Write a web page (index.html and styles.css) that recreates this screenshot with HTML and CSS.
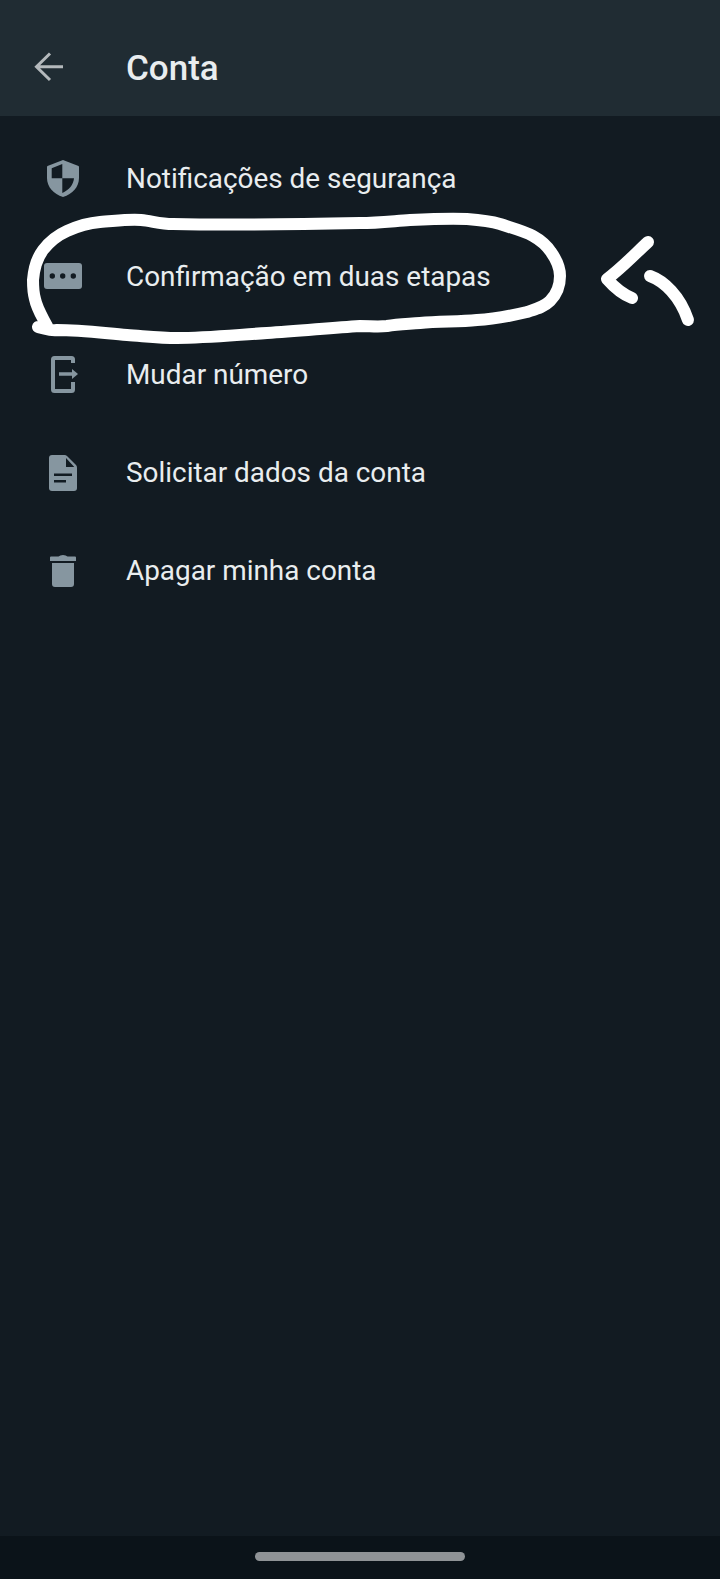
FILE: index.html
```html
<!DOCTYPE html>
<html lang="pt">
<head>
<meta charset="utf-8">
<title>Conta</title>
<link rel="stylesheet" href="styles.css">
</head>
<body>
<div class="screen">
  <header class="topbar">
    <svg class="back" viewBox="0 0 32 32" width="32" height="32"><path d="M30 15.700H4M17 2.500 3.500 15.700 17 29"/></svg>
    <h1 class="title">Conta</h1>
  </header>
  <main class="menu">
    <div class="row">
      <svg class="icon" viewBox="0 0 40 40"><path d="M20 2 4.500 8Q4 8.300 4 9v11c0 9 6.500 16 16 19 9.500-3 16-10 16-19V9q0-.7-.5-1z"/><path class="cut" d="M8.700 10.300 19.300 6v14.300H8.700zM19.300 20.300H31c-.5 6.500-5 11.700-11.700 14.700z"/></svg>
      <span class="label">Notificações de segurança</span>
    </div>
    <div class="row">
      <svg class="icon" viewBox="0 0 40 40"><rect x="1" y="7" width="38" height="26" rx="3"/><circle class="cut" cx="9.300" cy="20" r="2.700"/><circle class="cut" cx="19.700" cy="20" r="2.700"/><circle class="cut" cx="30.300" cy="20" r="2.700"/></svg>
      <span class="label">Confirmação em duas etapas</span>
    </div>
    <div class="row">
      <svg class="icon" viewBox="0 0 40 40"><path class="outline" d="M30 9V5.500q0-1.500-1.500-1.500h-17Q10 4 10 5.500v30q0 1.500 1.500 1.500h17q1.500 0 1.500-1.500V28"/><path class="arrow" d="M16 20h14"/><path d="m29 15 6 5-6 5z"/></svg>
      <span class="label">Mudar número</span>
    </div>
    <div class="row">
      <svg class="icon" viewBox="0 0 40 40"><path d="M9 3h12.500q1.500 0 2.500 1L33 13q1 1 1 2.500V36q0 3-3 3H9q-3 0-3-3V6q0-3 3-3z"/><path class="cut" d="M23 6v9h8.300zM11 21.500h18V24H11zM11 28h12v2.500H11z"/></svg>
      <span class="label">Solicitar dados da conta</span>
    </div>
    <div class="row">
      <svg class="icon" viewBox="0 0 40 40"><path d="M9 13h22v21q0 3-3 3H12q-3 0-3-3zM8 6.500h7.500Q17 5 20 5t4.500 1.500H32q1 0 1 1V11H7V7.500q0-1 1-1z"/></svg>
      <span class="label">Apagar minha conta</span>
    </div>
  </main>
  <footer class="navbar"><span class="pill"></span></footer>
  <svg class="scribble" viewBox="0 0 720 1579">
    <path d="M47 326C43 318 37 309 35 299C33 292 33 286 33 280C34 268 37 258 43 250C50 241 58 235 67 231C78 226 88 223 100 222C115 221 128 219 141 220C152 221 160 224 173 224C220 225 310 224 360 223C378 223 394 221 410 220C430 219 450 218 467 219C480 220 490 221 500 224C512 228 524 231 533 236C542 241 547 246 551 252C556 259 560 266 560 276C560 287 556 295 550 301C544 307 536 309 527 312C510 316 495 319 477 320C458 322 440 321 420 323C408 324 398 324 387 326C378 327 370 326 360 326C330 328 298 331 267 333C235 335 205 338 177 338C160 338 143 336 127 335C103 333 80 330 57 330C50 331 44 328 38 327"/>
    <path d="M648 242C637 252 622 268 607 279C614 287 622 294 632 298"/>
    <path d="M650 276C664 281 680 296 688 320"/>
  </svg>
</div>
</body>
</html>
```
FILE: styles.css
```css
* {
  box-sizing: border-box;
}

html,
body {
  margin: 0;
  padding: 0;
  background: #121b22;
}

.screen {
  position: relative;
  display: flex;
  flex-direction: column;
  width: 720px;
  height: 1579px;
  overflow: hidden;
  background: #121b22;
  font-family: Roboto, "Liberation Sans", sans-serif;
  color: #e9edef;
}

.topbar {
  display: flex;
  align-items: center;
  gap: 61px;
  flex: 0 0 116px;
  padding: 18px 0 0 33px;
  background: #202c33;
}

.back {
  flex: none;
  fill: none;
  stroke: #b4b9bc;
  stroke-width: 3;
}

.title {
  margin: 0;
  padding-top: 4px;
  font-size: 35px;
  font-weight: 500;
  line-height: 40px;
}

.menu {
  display: flex;
  flex-direction: column;
  flex: 1;
  padding-top: 13px;
}

.row {
  display: flex;
  align-items: center;
  gap: 43px;
  height: 98px;
  padding-left: 43px;
}

.icon {
  flex: none;
  width: 40px;
  height: 40px;
  fill: #8696a0;
}

.icon .cut {
  fill: #121b22;
}

.icon .outline {
  fill: none;
  stroke: #8696a0;
  stroke-width: 4;
}

.icon .arrow {
  fill: none;
  stroke: #8696a0;
  stroke-width: 3.500;
}

.label {
  padding-top: 2px;
  font-size: 27.900px;
  line-height: 36px;
  color: #e9edef;
}

.navbar {
  display: flex;
  justify-content: center;
  flex: 0 0 43px;
  padding-top: 16px;
  background: #0b1319;
}

.pill {
  width: 210px;
  height: 9px;
  border-radius: 5px;
  background: #8f9396;
}

.scribble {
  position: absolute;
  inset: 0;
  width: 720px;
  height: 1579px;
  fill: none;
  stroke: #fff;
  stroke-width: 12;
  stroke-linecap: round;
  stroke-linejoin: round;
  pointer-events: none;
}
```
